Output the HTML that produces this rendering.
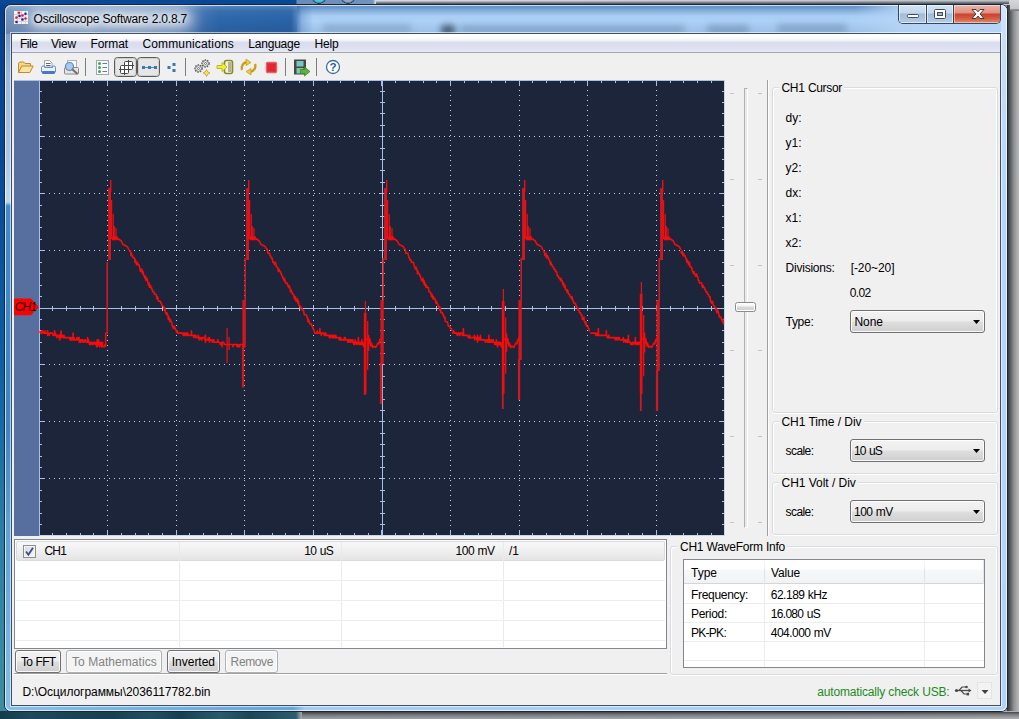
<!DOCTYPE html><html><head><meta charset="utf-8"><title>Oscilloscope Software 2.0.8.7</title><style>
html,body{margin:0;padding:0}
body{width:1019px;height:719px;overflow:hidden;position:relative;font-family:"Liberation Sans",sans-serif;font-size:12px;color:#000;
 background:#0b4a96}
div,span,i{box-sizing:border-box}
.a{position:absolute}
.t{position:absolute;white-space:nowrap;z-index:5}
#desk{position:absolute;left:0;top:0;width:1019px;height:719px;
 background:
  linear-gradient(180deg,#d4d7da 0,#c2c6ca 9px,#5a5e62 10px,#9a9ea2 11px) 1010px 0/9px 11px no-repeat,
  linear-gradient(180deg,rgba(0,0,0,0) 0,rgba(40,55,70,.15) 1px,rgba(30,45,60,.5) 2.5px,rgba(20,35,50,.75) 4px) 376px 0/633px 4px no-repeat,
  radial-gradient(circle at 7px -4px,#4fc0d8 0,#4fc0d8 6px,#223a55 7.5px,rgba(0,0,0,0) 8px) 312px 0/15px 4px no-repeat,
  radial-gradient(circle at 7px -4px,#8fa6c4 0,#8fa6c4 6px,#223a55 7.5px,rgba(0,0,0,0) 8px) 341px 0/15px 4px no-repeat,
  linear-gradient(90deg,#0a4896 0,#0a4896 296px,#6a8cb8 297px,#7393bd 373px,#e4e6e9 376px,#d6d9dc 700px,#c8cacc 100%) 0 0/1019px 5px no-repeat,
  linear-gradient(180deg,rgba(0,0,0,.6) 0,rgba(0,0,0,.25) 3px,rgba(0,0,0,0) 7px) 302px 712px/717px 7px no-repeat,
  linear-gradient(90deg,#143a4c 0,#1d4a5c 30px,#17404f 110px,#21505f 150px,#173f4e 180px,#2a5c6c 220px,#1c4656 250px,#2c5e6e 296px,#9ea2a6 301px,#aeb0b3 100%) 0 711px/1019px 8px no-repeat,
  linear-gradient(180deg,#093f8c 0,#0a4a98 25%,#0d5ea4 50%,#2b7fa6 75%,#3f8e9e 100%) 0 0/8px 719px no-repeat,
  linear-gradient(90deg,#2a2d30 0,#55585b 3px,#909396 7px,#b8babc 12px) 1007px 0/12px 719px no-repeat,
  #888}
#win{position:absolute;left:4px;top:4px;width:1004px;height:708px;border:1px solid #17263c;border-radius:7px;overflow:hidden;background:#b4d4f7}
#win:after{content:"";position:absolute;left:0;top:0;right:0;bottom:0;border-radius:6px;box-shadow:inset 0 0 0 1px rgba(255,255,255,.7)}
#tl{position:absolute;left:0;top:0;width:310px;height:29px;
 background:linear-gradient(90deg,#6f92be 0,#7d9dc6 30px,#7c9cc5 140px,#6a8fc0 175px,#3d70b0 198px,#2e67aa 215px,#2a63a7 286px,rgba(42,99,167,.75) 291px,rgba(60,110,175,.3) 297px,rgba(90,130,190,0) 308px)}
#tl:after{content:"";position:absolute;left:0;top:0;width:292px;height:29px;background:linear-gradient(180deg,rgba(255,255,255,.22) 0,rgba(255,255,255,.05) 6px,rgba(0,0,30,0) 14px,rgba(0,0,40,.10) 29px)}
#tr{position:absolute;left:0;top:0;width:1002px;height:29px;
 background:linear-gradient(90deg,rgba(180,212,246,0) 0,rgba(180,212,246,0) 850px,rgba(180,212,246,.92) 896px,rgba(184,214,247,.95) 100%),linear-gradient(180deg,#5e8bbf 0,#6f9bcd 3px,#8fb7e2 7px,#a9cdf3 11px,#aed1f6 16px,#a5c9ef 21px,#9abde6 29px)}
.sm{position:absolute;filter:blur(3px);background:#5f7ea6;opacity:.55;border-radius:3px}
#glow{position:absolute;left:26px;top:6px;width:164px;height:18px;background:rgba(255,255,255,.48);filter:blur(7px);border-radius:9px}
#fl{position:absolute;left:0;top:29px;width:7px;height:677px;background:linear-gradient(180deg,#7e9ec8 0,#9cb9dc 40px,#a9c6e6 120px,#bcd6ef 168px,#3f8bcb 172px,#3a86c6 390px,#5aa2d7 490px,#84bfe5 676px)}
#fr{position:absolute;left:996px;top:0;width:6px;height:706px;background:linear-gradient(180deg,#d2e4f7 0,#c4dcf5 60px,#b6d5f6 200px,#b3d3f6 100%)}
#fb{position:absolute;left:0;top:700px;width:1002px;height:6px;background:linear-gradient(90deg,#86c0e8 0,#74b0e0 150px,#68a6da 288px,#a6caf1 300px,#b3d3f7 100%)}
#cli{position:absolute;left:12px;top:34px;width:988px;height:671px;background:#f0f0f0;
 box-shadow:0 0 0 1px #3f4f66,0 0 0 2px rgba(255,255,255,.6)}
#menu{position:absolute;left:12px;top:34px;width:988px;height:19px;border-bottom:1px solid #a3a6b3;
 background:linear-gradient(180deg,#fff 0,#fcfcfe 4px,#eef0f8 7px,#dadded 8px,#dcdfee 13px,#e6e8f5 18px)}
.combo{position:absolute;width:135px;height:23px;border:1px solid #707070;border-radius:3px;
 background:linear-gradient(180deg,#f3f3f3 0,#ececec 10px,#dedede 11px,#cfcfcf 21px);box-shadow:inset 0 0 0 1px rgba(255,255,255,.85)}
.combo i{position:absolute;right:4px;top:9px;width:7px;height:4px;background:#000;clip-path:polygon(0 0,100% 0,50% 100%)}
.btn{position:absolute;height:23px;border:1px solid #707070;border-radius:3px;
 background:linear-gradient(180deg,#f3f3f3 0,#ececec 10px,#dedede 11px,#cfcfcf 21px);box-shadow:inset 0 0 0 1px rgba(255,255,255,.85)}
.btn.dis{border-color:#adb2b5;background:#f4f4f4;box-shadow:inset 0 0 0 1px #fcfcfc}
.gb{position:absolute;border:1px solid #d8dcdf;border-radius:3px;box-shadow:inset 1px 1px 0 0 #fff,inset -1px 0 0 0 #fff,0 1px 0 0 #fff}
.gl{position:absolute;background:#f0f0f0;height:4px}
.lv{position:absolute;border:1px solid #828790;background:#fff}
</style></head><body>
<div id="desk"></div>
<div id="win"><div id="tr"></div><div id="tl"></div><div id="fl"></div><div id="fr"></div><div id="fb"></div><div id="glow"></div><div class="sm" style="left:318px;top:19px;width:88px;height:9px;opacity:.35"></div><div class="sm" style="left:436px;top:20px;width:14px;height:10px;background:#33465e;opacity:.8"></div><div class="sm" style="left:455px;top:20px;width:225px;height:9px;opacity:.4"></div><div class="sm" style="left:702px;top:20px;width:42px;height:9px;opacity:.5"></div><div class="sm" style="left:772px;top:19px;width:70px;height:9px;opacity:.45"></div></div>
<div class="a" style="left:898px;top:5px;width:103px;height:19px;border:1px solid #34455c;border-top:none;border-radius:0 0 5px 5px;overflow:hidden;background:#9fbbd8">
<div class="a" style="left:0;top:0;width:27px;height:18px;background:linear-gradient(180deg,#d4e3f3 0,#c2d6ea 8px,#9fbcd9 9px,#b4cce4 18px);box-shadow:inset 0 0 0 1px rgba(255,255,255,.6)"></div>
<div class="a" style="left:27px;top:0;width:1px;height:18px;background:#34455c"></div>
<div class="a" style="left:28px;top:0;width:26px;height:18px;background:linear-gradient(180deg,#d4e3f3 0,#c2d6ea 8px,#9fbcd9 9px,#b4cce4 18px);box-shadow:inset 0 0 0 1px rgba(255,255,255,.6)"></div>
<div class="a" style="left:54px;top:0;width:1px;height:18px;background:#34455c"></div>
<div class="a" style="left:55px;top:0;width:47px;height:18px;background:linear-gradient(180deg,#ecb5a8 0,#e09080 8px,#c9452c 9px,#d2583e 13px,#e08a6c 18px);box-shadow:inset 0 0 0 1px rgba(255,255,255,.45)"></div>
<svg class="a" style="left:0;top:-1px" width="102" height="19" viewBox="0 0 102 19">
<rect x="8.500" y="10.500" width="11" height="3" rx="1" fill="#fff" stroke="#3f4a5c" stroke-width="1"/>
<rect x="35.500" y="5.500" width="11" height="9" rx="1" fill="#fff" stroke="#3f4a5c" stroke-width="1"/>
<rect x="38.500" y="8.500" width="5" height="3" fill="#9fb6cf" stroke="#3f4a5c" stroke-width="1"/>
<path d="M73 5.500h4l2 2.300 2-2.300h4l-3.900 4.400 3.900 4.600h-4l-2-2.400-2 2.400h-4l3.900-4.600z" fill="#fff" stroke="#4a3838" stroke-width="1" stroke-linejoin="round"/>
</svg></div>
<svg class="a" style="left:13px;top:11px" width="15" height="14" viewBox="0 0 15 14"><rect x="0" y="0" width="15" height="14" fill="#8a8f9a"/><rect x="1" y="0" width="14" height="13" fill="#f6f3f3"/>
<path d="M1 3.500h14M1 7.500h14M1 10.500h14M4.500 0v13M8.500 0v13M12.500 0v13" stroke="#d8cfd4" stroke-width="1"/>
<circle cx="6" cy="1.800" r="1.300" fill="#e02020"/><circle cx="9.500" cy="4.500" r="1.300" fill="#e02020"/><circle cx="3.500" cy="6.500" r="1.300" fill="#e02020"/><circle cx="12.500" cy="7.500" r="1.300" fill="#e02020"/>
<circle cx="12.500" cy="2.800" r="1.300" fill="#2020c0"/><circle cx="6.500" cy="5" r="1.300" fill="#2020c0"/><circle cx="9.500" cy="8.500" r="1.300" fill="#2020c0"/><circle cx="3.500" cy="11" r="1.300" fill="#2020c0"/></svg>
<div id="cli"></div>
<div id="menu"></div>
<svg style="position:absolute;left:13px;top:53px" width="360" height="27" viewBox="13 53 360 27">
<rect x="85" y="58" width="1" height="18" fill="#7d7d7d" shape-rendering="crispEdges"/>
<rect x="185" y="58" width="1" height="18" fill="#7d7d7d" shape-rendering="crispEdges"/>
<rect x="285" y="58" width="1" height="18" fill="#7d7d7d" shape-rendering="crispEdges"/>
<rect x="316" y="58" width="1" height="18" fill="#7d7d7d" shape-rendering="crispEdges"/>
<path d="M18.5 72.5v-9.2l1.2-1.3h4l1.3 1.5h5.5v2.5" fill="#f5d78a" stroke="#c08a30" stroke-width="1"/>
<path d="M18.5 72.5l3.2-6.5h11.5l-3.4 6.5z" fill="#fbe3a0" stroke="#c08a30" stroke-width="1" stroke-linejoin="round"/>
<path d="M44.5 67v-6.500h5l2.500 2.500v4z" fill="#fffff8" stroke="#a8a898" stroke-width="1"/>
<path d="M46 63.500h4.500M46 65.500h4.500" stroke="#506890" stroke-width="1"/>
<path d="M41.500 72v-4.500q0-1.500 1.500-1.500h1.500v1.500h8v-1.500h1.500q1.500 0 1.500 1.500v4.500z" fill="#eaf1fb" stroke="#6a8cc8" stroke-width="1"/>
<rect x="42" y="71" width="13" height="3" rx="1.2" fill="#4a78c8"/>
<rect x="67.5" y="60.500" width="9" height="10" fill="#fcfcfc" stroke="#b0b0b0" stroke-width="1"/>
<rect x="64.5" y="67.5" width="14" height="6.5" rx="1" fill="#e6e6e6" stroke="#8a8a8a" stroke-width="1"/>
<circle cx="69.5" cy="66.5" r="4" fill="#a8c8f0" stroke="#6088b8" stroke-width="1.2"/>
<path d="M72.5 69.5l4.5 4" stroke="#707070" stroke-width="2" stroke-linecap="round"/>
<rect x="96.5" y="60.500" width="12" height="14" fill="#f6fbff" stroke="#a0a8b8" stroke-width="1"/>
<circle cx="99.500" cy="63.5" r="1.5" fill="#48a848"/>
<path d="M102.5 63.5h4.5" stroke="#6a7890" stroke-width="1"/>
<circle cx="99.500" cy="67.5" r="1.5" fill="#48a848"/>
<path d="M102.5 67.5h4.5" stroke="#6a7890" stroke-width="1"/>
<circle cx="99.500" cy="71.5" r="1.5" fill="#48a848"/>
<path d="M102.5 71.5h4.5" stroke="#6a7890" stroke-width="1"/>
<rect x="114.5" y="57.500" width="22" height="19" rx="3" fill="#e6e6e6" stroke="#5c5c5c" stroke-width="1"/>
<rect x="115.5" y="58.500" width="20" height="17" rx="2.5" fill="none" stroke="#cfcfcf" stroke-width="1"/>
<rect x="137.5" y="57.500" width="22" height="19" rx="3" fill="#e6e6e6" stroke="#5c5c5c" stroke-width="1"/>
<rect x="138.5" y="58.500" width="20" height="17" rx="2.5" fill="none" stroke="#cfcfcf" stroke-width="1"/>
<rect x="124.5" y="61.500" width="8" height="8" rx="1" fill="#fff" stroke="#444" stroke-width="1"/>
<path d="M128.5 60v10M123 65.500h11" stroke="#444" stroke-width="1"/>
<rect x="120.5" y="65.500" width="8" height="8" rx="1" fill="#fff" stroke="#444" stroke-width="1"/>
<path d="M124.5 64v11M119 69.500h11" stroke="#444" stroke-width="1"/>
<path d="M143 67.500h12" stroke="#5888b8" stroke-width="1"/>
<rect x="142" y="66" width="3" height="3" fill="#3a78b0"/>
<rect x="148" y="66" width="3" height="3" fill="#3a78b0"/>
<rect x="154" y="66" width="3" height="3" fill="#3a78b0"/>
<rect x="167.5" y="66" width="3" height="3" fill="#3a78b0"/>
<rect x="172.5" y="63" width="3" height="3" fill="#3a78b0"/>
<rect x="172.5" y="69" width="3" height="3" fill="#3a78b0"/>
<circle cx="198.5" cy="68.5" r="3.5999999999999996" fill="#f8f8f8" stroke="#585858" stroke-width="1.3" stroke-dasharray="1.5 1.1"/>
<circle cx="198.5" cy="68.5" r="2.8" fill="#fcfcfc" stroke="#606060" stroke-width="0.8"/>
<circle cx="198.5" cy="68.5" r="1" fill="#fff" stroke="#505050" stroke-width="0.8"/>
<circle cx="205.5" cy="63.5" r="3.5999999999999996" fill="#f8f8f8" stroke="#585858" stroke-width="1.3" stroke-dasharray="1.5 1.1"/>
<circle cx="205.5" cy="63.5" r="2.8" fill="#fcfcfc" stroke="#606060" stroke-width="0.8"/>
<circle cx="205.5" cy="63.5" r="1" fill="#fff" stroke="#505050" stroke-width="0.8"/>
<path d="M206.5 69.500l1.2 2.300 2.300 1.200-2.300 1.200-1.200 2.300-1.200-2.300-2.300-1.200 2.300-1.200z" fill="#f8e060" stroke="#b89820" stroke-width="0.7"/>
<rect x="224.5" y="60.500" width="8" height="13" rx="2" fill="#f4f4e0" stroke="#8a8a20" stroke-width="1.6"/>
<rect x="228" y="62" width="3.5" height="10" fill="#b0b0a0"/>
<path d="M217 65.500h5v-3l5 4.500-5 4.500v-3h-5z" fill="#f4f030" stroke="#b0a818" stroke-width="0.8"/>
<path d="M242 70a6 6 0 0 1 5-8" fill="none" stroke="#c8a020" stroke-width="2.400"/>
<path d="M255 64a6 6 0 0 1-5 8" fill="none" stroke="#c8a020" stroke-width="2.400"/>
<path d="M246 59l5 3.500-5 3z" fill="#f0d030" stroke="#b08c18" stroke-width="0.6"/>
<path d="M251 75l-5-3.500 5-3z" fill="#f0d030" stroke="#b08c18" stroke-width="0.6"/>
<rect x="266.500" y="62.500" width="10" height="10" rx="1" fill="#e02830" stroke="#e86068" stroke-width="1.4"/>
<rect x="294" y="59.500" width="12" height="15" fill="#484848"/>
<rect x="296.500" y="61" width="7" height="5.500" fill="#78c8c0"/>
<rect x="296.500" y="68" width="7" height="5.500" fill="#78c8b0"/>
<path d="M300.500 69.500h4v-2.500l5.500 4.500-5.500 4.500v-2.500h-4z" fill="#60b040" stroke="#3a8828" stroke-width="0.8"/>
<circle cx="333" cy="67" r="6.500" fill="#fff" stroke="#3a6ea8" stroke-width="1.3"/>
<text x="333" y="71.300" text-anchor="middle" font-family="Liberation Sans, sans-serif" font-weight="bold" font-size="11.500" fill="#2a5a98">?</text>
</svg>
<svg style="position:absolute;left:14px;top:80px" width="712" height="457" viewBox="14 80 712 457" shape-rendering="crispEdges">
<rect x="14" y="80" width="26" height="456" fill="#566f9e"/>
<rect x="40" y="80" width="685" height="456" fill="#1c2539"/>
<path d="M107.5 90v440 M176.5 90v440 M244.5 90v440 M313.5 90v440 M450.5 90v440 M519.5 90v440 M587.5 90v440 M656.5 90v440 M49 136.5h670 M49 193.5h670 M49 250.5h670 M49 364.5h670 M49 421.5h670 M49 478.5h670" stroke="#c3cfe6" stroke-width="1" stroke-dasharray="1 4" fill="none"/>
<path d="M52.5 81v2 M52.5 535v-2 M52.5 306v5 M66.5 81v2 M66.5 535v-2 M66.5 306v5 M80.5 81v2 M80.5 535v-2 M80.5 306v5 M93.5 81v2 M93.5 535v-2 M93.5 306v5 M107.5 81v5 M107.5 535v-5 M107.5 306v5 M121.5 81v2 M121.5 535v-2 M121.5 306v5 M135.5 81v2 M135.5 535v-2 M135.5 306v5 M148.5 81v2 M148.5 535v-2 M148.5 306v5 M162.5 81v2 M162.5 535v-2 M162.5 306v5 M176.5 81v5 M176.5 535v-5 M176.5 306v5 M189.5 81v2 M189.5 535v-2 M189.5 306v5 M203.5 81v2 M203.5 535v-2 M203.5 306v5 M217.5 81v2 M217.5 535v-2 M217.5 306v5 M231.5 81v2 M231.5 535v-2 M231.5 306v5 M244.5 81v5 M244.5 535v-5 M244.5 306v5 M258.5 81v2 M258.5 535v-2 M258.5 306v5 M272.5 81v2 M272.5 535v-2 M272.5 306v5 M285.5 81v2 M285.5 535v-2 M285.5 306v5 M299.5 81v2 M299.5 535v-2 M299.5 306v5 M313.5 81v5 M313.5 535v-5 M313.5 306v5 M327.5 81v2 M327.5 535v-2 M327.5 306v5 M340.5 81v2 M340.5 535v-2 M340.5 306v5 M354.5 81v2 M354.5 535v-2 M354.5 306v5 M368.5 81v2 M368.5 535v-2 M368.5 306v5 M381.5 81v5 M381.5 535v-5 M381.5 306v5 M395.5 81v2 M395.5 535v-2 M395.5 306v5 M409.5 81v2 M409.5 535v-2 M409.5 306v5 M423.5 81v2 M423.5 535v-2 M423.5 306v5 M436.5 81v2 M436.5 535v-2 M436.5 306v5 M450.5 81v5 M450.5 535v-5 M450.5 306v5 M464.5 81v2 M464.5 535v-2 M464.5 306v5 M478.5 81v2 M478.5 535v-2 M478.5 306v5 M491.5 81v2 M491.5 535v-2 M491.5 306v5 M505.5 81v2 M505.5 535v-2 M505.5 306v5 M519.5 81v5 M519.5 535v-5 M519.5 306v5 M532.5 81v2 M532.5 535v-2 M532.5 306v5 M546.5 81v2 M546.5 535v-2 M546.5 306v5 M560.5 81v2 M560.5 535v-2 M560.5 306v5 M574.5 81v2 M574.5 535v-2 M574.5 306v5 M587.5 81v5 M587.5 535v-5 M587.5 306v5 M601.5 81v2 M601.5 535v-2 M601.5 306v5 M615.5 81v2 M615.5 535v-2 M615.5 306v5 M628.5 81v2 M628.5 535v-2 M628.5 306v5 M642.5 81v2 M642.5 535v-2 M642.5 306v5 M656.5 81v5 M656.5 535v-5 M656.5 306v5 M670.5 81v2 M670.5 535v-2 M670.5 306v5 M683.5 81v2 M683.5 535v-2 M683.5 306v5 M697.5 81v2 M697.5 535v-2 M697.5 306v5 M711.5 81v2 M711.5 535v-2 M711.5 306v5 M40 91.5h2 M724 91.5h-2 M380 91.5h5 M40 102.5h2 M724 102.5h-2 M380 102.5h5 M40 113.5h2 M724 113.5h-2 M380 113.5h5 M40 125.5h2 M724 125.5h-2 M380 125.5h5 M40 136.5h5 M724 136.5h-5 M380 136.5h5 M40 148.5h2 M724 148.5h-2 M380 148.5h5 M40 159.5h2 M724 159.5h-2 M380 159.5h5 M40 170.5h2 M724 170.5h-2 M380 170.5h5 M40 182.5h2 M724 182.5h-2 M380 182.5h5 M40 193.5h5 M724 193.5h-5 M380 193.5h5 M40 205.5h2 M724 205.5h-2 M380 205.5h5 M40 216.5h2 M724 216.5h-2 M380 216.5h5 M40 227.5h2 M724 227.5h-2 M380 227.5h5 M40 239.5h2 M724 239.5h-2 M380 239.5h5 M40 250.5h5 M724 250.5h-5 M380 250.5h5 M40 262.5h2 M724 262.5h-2 M380 262.5h5 M40 273.5h2 M724 273.5h-2 M380 273.5h5 M40 285.5h2 M724 285.5h-2 M380 285.5h5 M40 296.5h2 M724 296.5h-2 M380 296.5h5 M40 319.5h2 M724 319.5h-2 M380 319.5h5 M40 330.5h2 M724 330.5h-2 M380 330.5h5 M40 342.5h2 M724 342.5h-2 M380 342.5h5 M40 353.5h2 M724 353.5h-2 M380 353.5h5 M40 364.5h5 M724 364.5h-5 M380 364.5h5 M40 376.5h2 M724 376.5h-2 M380 376.5h5 M40 387.5h2 M724 387.5h-2 M380 387.5h5 M40 399.5h2 M724 399.5h-2 M380 399.5h5 M40 410.5h2 M724 410.5h-2 M380 410.5h5 M40 421.5h5 M724 421.5h-5 M380 421.5h5 M40 433.5h2 M724 433.5h-2 M380 433.5h5 M40 444.5h2 M724 444.5h-2 M380 444.5h5 M40 456.5h2 M724 456.5h-2 M380 456.5h5 M40 467.5h2 M724 467.5h-2 M380 467.5h5 M40 478.5h5 M724 478.5h-5 M380 478.5h5 M40 490.5h2 M724 490.5h-2 M380 490.5h5 M40 501.5h2 M724 501.5h-2 M380 501.5h5 M40 513.5h2 M724 513.5h-2 M380 513.5h5 M40 524.5h2 M724 524.5h-2 M380 524.5h5" stroke="#a9c0e6" stroke-width="1" fill="none"/>
<path d="M39.5 80v456M14 80.5h711M40 308.5h684M382.5 81v454" stroke="#a9c0e6" stroke-width="1" fill="none"/>
<path d="M724.5 80v456M40 535.5h685" stroke="#c6d6ee" stroke-width="1" fill="none"/>
<g shape-rendering="auto"><rect x="106.4" y="262.0" width="1.6" height="72.0" fill="#d2181e"/><rect x="108.1" y="188.0" width="2.9" height="72.0" fill="#d2181e"/><rect x="110.0" y="180.0" width="1.4" height="12.0" fill="#f40c0c"/><rect x="110.9" y="200.0" width="1.3" height="39.0" fill="#f40c0c"/><rect x="111.8" y="236.3" width="6.0" height="4.0" fill="#f40c0c"/><rect x="241.9" y="346.5" width="2.3" height="41.0" fill="#d2181e"/><rect x="242.4" y="300.0" width="3.4" height="47.5" fill="#d2181e"/><rect x="244.4" y="258.0" width="1.6" height="43.0" fill="#d2181e"/><rect x="246.1" y="188.0" width="2.9" height="72.0" fill="#d2181e"/><rect x="248.0" y="180.0" width="1.4" height="12.0" fill="#f40c0c"/><rect x="248.9" y="200.0" width="1.3" height="39.0" fill="#f40c0c"/><rect x="249.8" y="236.3" width="6.0" height="4.0" fill="#f40c0c"/><rect x="363.8" y="313.0" width="2.7" height="81.0" fill="#f40c0c"/><rect x="363.9" y="393.0" width="1.8" height="2.0" fill="#d2181e"/><rect x="379.9" y="363.0" width="2.3" height="41.0" fill="#d2181e"/><rect x="380.4" y="300.0" width="3.4" height="64.0" fill="#d2181e"/><rect x="382.4" y="258.0" width="1.6" height="43.0" fill="#d2181e"/><rect x="384.1" y="188.0" width="2.9" height="72.0" fill="#d2181e"/><rect x="386.0" y="180.0" width="1.4" height="12.0" fill="#f40c0c"/><rect x="386.9" y="200.0" width="1.3" height="39.0" fill="#f40c0c"/><rect x="387.8" y="236.3" width="6.0" height="4.0" fill="#f40c0c"/><rect x="501.8" y="301.0" width="2.7" height="93.0" fill="#f40c0c"/><rect x="501.9" y="393.0" width="1.8" height="16.0" fill="#d2181e"/><rect x="517.9" y="359.0" width="2.3" height="41.0" fill="#d2181e"/><rect x="518.4" y="300.0" width="3.4" height="60.0" fill="#d2181e"/><rect x="520.4" y="258.0" width="1.6" height="43.0" fill="#d2181e"/><rect x="522.1" y="188.0" width="2.9" height="72.0" fill="#d2181e"/><rect x="524.0" y="180.0" width="1.4" height="12.0" fill="#f40c0c"/><rect x="524.9" y="200.0" width="1.3" height="39.0" fill="#f40c0c"/><rect x="525.8" y="236.3" width="6.0" height="4.0" fill="#f40c0c"/><rect x="639.8" y="294.0" width="2.7" height="100.0" fill="#f40c0c"/><rect x="639.9" y="393.0" width="1.8" height="18.0" fill="#d2181e"/><rect x="655.9" y="370.0" width="2.3" height="41.0" fill="#d2181e"/><rect x="656.4" y="300.0" width="3.4" height="71.0" fill="#d2181e"/><rect x="658.4" y="258.0" width="1.6" height="43.0" fill="#d2181e"/><rect x="660.1" y="188.0" width="2.9" height="72.0" fill="#d2181e"/><rect x="662.0" y="180.0" width="1.4" height="12.0" fill="#f40c0c"/><rect x="662.9" y="200.0" width="1.3" height="39.0" fill="#f40c0c"/><rect x="663.8" y="236.3" width="6.0" height="4.0" fill="#f40c0c"/><path d="M113.2 214.0L113.2 239.0 M114.2 226.0L114.2 239.0 M116.0 228.0L116.0 239.0 M227.1 328.0L227.1 363.0 M229.1 337.0L229.1 350.0 M251.2 214.0L251.2 239.0 M252.2 226.0L252.2 239.0 M254.0 228.0L254.0 239.0 M365.4 301.0L365.4 315.0 M367.7 321.0L367.7 370.0 M368.7 335.0L368.7 351.0 M389.2 214.0L389.2 239.0 M390.2 226.0L390.2 239.0 M392.0 228.0L392.0 239.0 M503.4 289.0L503.4 303.0 M505.7 317.4L505.7 373.8 M506.7 333.5L506.7 351.9 M527.2 214.0L527.2 239.0 M528.2 226.0L528.2 239.0 M530.0 228.0L530.0 239.0 M641.4 282.0L641.4 296.0 M643.7 315.0L643.7 376.2 M644.7 332.5L644.7 352.5 M665.2 214.0L665.2 239.0 M666.2 226.0L666.2 239.0 M668.0 228.0L668.0 239.0" fill="none" stroke="#e81216" stroke-width="1.25"/><polyline points="40.0,330.8 40.5,333.1 41.0,333.1 41.5,330.8 42.0,333.1 42.5,330.8 43.0,330.8 43.5,333.1 44.0,333.1 44.5,333.1 45.0,333.1 45.1,330.8 45.2,333.1 45.5,333.1 46.0,333.1 46.5,333.1 47.0,333.1 47.5,333.1 47.6,330.8 47.7,335.4 48.0,333.1 48.5,333.1 49.0,333.1 49.5,335.4 50.0,333.1 50.5,333.1 51.0,333.1 51.5,333.1 52.0,333.1 52.5,333.1 53.0,335.4 53.5,335.4 54.0,335.4 54.5,335.4 54.6,330.8 54.7,335.4 55.0,335.4 55.5,333.1 56.0,335.4 56.5,335.4 57.0,337.6 57.5,335.4 58.0,335.4 58.5,335.4 59.0,337.6 59.5,337.6 59.6,335.4 59.7,339.9 60.0,337.6 60.5,335.4 60.6,333.1 60.7,335.4 61.0,335.4 61.1,330.8 61.2,337.6 61.5,335.4 62.0,335.4 62.5,335.4 63.0,337.6 63.5,337.6 64.0,335.4 64.5,337.6 65.0,337.6 65.5,337.6 66.0,337.6 66.5,337.6 67.0,337.6 67.5,337.6 68.0,337.6 68.5,337.6 69.0,337.6 69.5,337.6 70.0,339.9 70.5,337.6 71.0,339.9 71.5,337.6 72.0,339.9 72.5,337.6 73.0,337.6 73.1,333.1 73.2,339.9 73.5,339.9 74.0,337.6 74.5,339.9 75.0,339.9 75.5,339.9 76.0,339.9 76.5,339.9 77.0,337.6 77.5,337.6 78.0,339.9 78.5,337.6 79.0,339.9 79.1,337.6 79.2,342.2 79.5,339.9 80.0,342.2 80.5,339.9 81.0,342.2 81.5,339.9 82.0,339.9 82.5,339.9 83.0,342.2 83.5,342.2 84.0,342.2 84.5,339.9 85.0,339.9 85.5,339.9 86.0,342.2 86.5,342.2 87.0,342.2 87.5,342.2 87.6,337.6 87.7,342.2 88.0,342.2 88.5,339.9 89.0,342.2 89.5,344.5 90.0,342.2 90.5,342.2 91.0,344.5 91.5,342.2 92.0,342.2 92.5,342.2 93.0,344.5 93.5,344.5 94.0,342.2 94.5,342.2 95.0,342.2 95.5,344.5 96.0,344.5 96.5,344.5 96.6,342.2 96.7,346.8 97.0,344.5 97.1,339.9 97.2,346.8 97.5,342.2 98.0,342.2 98.5,344.5 98.6,339.9 98.7,344.5 99.0,344.5 99.5,346.8 100.0,342.2 100.5,344.5 101.0,342.2 101.5,346.8 102.0,344.5 102.5,344.5 102.6,342.2 102.7,346.8 103.0,346.8 103.5,346.8 104.0,346.8 104.5,346.8 105.0,344.5 105.6,346.0 105.7,333.0 106.5,333.0" fill="none" stroke="#f40c0c" stroke-width="1.6" stroke-linejoin="round"/><polyline points="116.8,238.0 119.3,239.5 121.3,241.0 123.1,244.6 125.3,245.5 127.3,246.6 129.0,250.0" fill="none" stroke="#f40c0c" stroke-width="1.6" stroke-linejoin="round"/><polyline points="129.0,251.0 129.5,251.0 130.0,251.0 130.5,251.0 131.0,255.6 131.5,253.3 132.0,255.6 132.5,255.6 133.0,257.8 133.5,257.8 134.0,257.8 134.5,257.8 135.0,262.4 135.5,260.1 136.0,262.4 136.5,264.7 137.0,264.7 137.5,262.4 138.0,264.7 138.5,264.7 139.0,264.7 139.5,267.0 140.0,269.2 140.5,271.5 141.0,269.2 141.5,271.5 142.0,269.2 142.5,273.8 143.0,271.5 143.5,273.8 144.0,276.1 144.5,276.1 145.0,278.4 145.5,276.1 146.0,280.6 146.5,278.4 147.0,278.4 147.5,280.6 148.0,282.9 148.5,285.2 149.0,282.9 149.5,287.5 150.0,287.5 150.5,285.2 151.0,287.5 151.5,287.5 152.0,289.8 152.5,289.8 153.0,292.0 153.5,292.0 154.0,292.0 154.5,294.3 155.0,294.3 155.5,294.3 156.0,294.3 156.5,296.6 157.0,298.9 157.5,296.6 158.0,298.9 158.5,301.2 159.0,301.2 159.5,301.2 160.0,301.2 160.5,301.2 161.0,303.4 161.5,303.4 162.0,305.7 162.5,305.7 163.0,305.7" fill="none" stroke="#f40c0c" stroke-width="1.6" stroke-linejoin="round"/><polyline points="163.4,305.7 163.9,308.0 164.4,310.3 164.9,308.0 165.4,312.6 165.9,312.6 166.4,314.8 166.9,312.6 167.4,314.8 167.9,314.8 168.4,319.4 168.9,317.1 169.4,319.4 169.9,321.7 170.4,319.4 170.9,321.7 171.4,321.7 171.9,324.0 172.4,326.2 172.9,326.2 173.4,328.5 173.9,326.2 174.4,326.2 174.9,328.5 175.4,328.5 175.9,330.8" fill="none" stroke="#f40c0c" stroke-width="1.6" stroke-linejoin="round"/><polyline points="176.3,333.1 176.8,330.8 177.3,330.8 177.8,333.1 178.3,333.1 178.8,333.1 179.3,333.1 179.8,333.1 180.3,333.1 180.8,333.1 181.3,333.1 181.8,333.1 182.3,333.1 182.8,333.1 183.3,335.4 183.8,333.1 184.3,335.4 184.8,333.1 185.3,333.1 185.8,335.4 186.3,333.1 186.8,335.4 187.3,335.4 187.8,333.1 188.3,335.4 188.8,335.4 189.3,335.4 189.8,335.4 190.3,335.4 190.8,335.4 191.3,335.4 191.4,330.8 191.5,335.4 191.8,335.4 192.3,335.4 192.8,335.4 193.3,335.4 193.8,337.6 194.3,335.4 194.8,335.4 195.3,335.4 195.8,337.6 195.9,335.4 196.0,337.6 196.3,337.6 196.8,337.6 197.3,337.6 197.8,337.6 198.3,335.4 198.8,337.6 199.3,339.9 199.8,337.6 200.3,337.6 200.8,337.6 201.3,339.9 201.8,339.9 202.3,337.6 202.8,337.6 203.3,337.6 203.8,337.6 204.3,337.6 204.8,339.9 205.3,339.9 205.4,335.4 205.5,342.2 205.8,339.9 206.3,339.9 206.8,339.9 207.3,339.9 207.8,339.9 208.3,337.6 208.8,339.9 209.3,339.9 209.4,337.6 209.5,342.2 209.8,339.9 210.3,339.9 210.8,339.9 211.3,339.9 211.8,339.9 212.3,342.2 212.8,342.2 213.3,339.9 213.8,339.9 214.3,342.2 214.8,342.2 215.3,342.2 215.8,342.2 216.3,342.2 216.8,342.2 217.3,342.2 217.8,339.9 218.3,342.2 218.8,342.2 219.3,342.2 219.8,342.2 220.3,344.5 220.8,344.5 221.3,344.5 221.8,344.5 221.9,342.2 222.0,346.8 222.3,342.2 222.8,342.2 223.3,342.2 223.8,342.2 224.3,344.5 224.8,344.5 225.3,344.5 225.8,344.5 228.1,344.5 228.6,344.5 229.1,344.5 229.6,344.5 230.1,344.5 230.6,344.5 231.1,344.5 231.6,344.5 232.1,344.5 232.6,344.5 233.1,346.8 233.6,344.5 234.1,344.5 234.6,344.5 235.1,344.5 235.6,344.5 236.1,344.5 236.6,344.5 237.1,346.8 237.6,344.5 238.1,346.8 238.6,344.5 239.1,346.8 239.6,346.8 240.1,344.5 240.6,344.5 241.1,344.5 241.6,344.5 242.1,344.5 242.6,344.5 243.1,346.8 243.6,346.8" fill="none" stroke="#f40c0c" stroke-width="1.6" stroke-linejoin="round"/><polyline points="254.8,238.0 257.3,239.5 259.3,241.0 261.1,244.6 263.3,245.5 265.3,246.6 267.0,250.0" fill="none" stroke="#f40c0c" stroke-width="1.6" stroke-linejoin="round"/><polyline points="267.0,248.7 267.5,251.0 268.0,253.3 268.5,253.3 269.0,253.3 269.5,253.3 270.0,255.6 270.5,255.6 271.0,257.8 271.5,257.8 272.0,257.8 272.5,260.1 273.0,262.4 273.5,262.4 274.0,262.4 274.5,264.7 275.0,262.4 275.5,262.4 276.0,264.7 276.5,267.0 277.0,267.0 277.5,267.0 278.0,269.2 278.5,271.5 279.0,269.2 279.5,271.5 280.0,271.5 280.5,271.5 281.0,273.8 281.5,273.8 282.0,276.1 282.5,276.1 283.0,278.4 283.5,278.4 284.0,280.6 284.5,278.4 285.0,280.6 285.5,282.9 286.0,282.9 286.5,282.9 287.0,282.9 287.5,285.2 288.0,285.2 288.5,287.5 289.0,285.2 289.5,287.5 290.0,287.5 290.5,292.0 291.0,289.8 291.5,292.0 292.0,292.0 292.5,294.3 293.0,294.3 293.5,294.3 294.0,296.6 294.5,298.9 295.0,296.6 295.5,296.6 296.0,301.2 296.5,301.2 297.0,301.2 297.5,298.9 298.0,303.4 298.5,301.2 299.0,305.7 299.5,305.7 300.0,305.7 300.5,308.0 301.0,305.7" fill="none" stroke="#f40c0c" stroke-width="1.6" stroke-linejoin="round"/><polyline points="301.4,308.0 301.9,308.0 302.4,310.3 302.9,310.3 303.4,310.3 303.9,312.6 304.4,314.8 304.9,314.8 305.4,314.8 305.9,314.8 306.4,314.8 306.9,317.1 307.4,317.1 307.9,321.7 308.4,319.4 308.9,321.7 309.4,321.7 309.9,324.0 310.4,324.0 310.9,324.0 311.4,324.0 311.9,326.2 312.4,326.2 312.9,328.5 313.4,328.5 313.9,330.8" fill="none" stroke="#f40c0c" stroke-width="1.6" stroke-linejoin="round"/><polyline points="314.3,330.8 314.8,333.1 315.3,333.1 315.8,333.1 316.3,333.1 316.8,333.1 317.3,330.8 317.8,333.1 318.3,333.1 318.8,333.1 319.3,333.1 319.8,333.1 319.9,328.5 320.0,333.1 320.3,333.1 320.8,333.1 321.3,335.4 321.8,333.1 322.3,333.1 322.8,333.1 323.3,333.1 323.8,333.1 324.3,335.4 324.8,333.1 325.3,335.4 325.8,333.1 326.3,335.4 326.8,335.4 327.3,335.4 327.8,335.4 328.3,335.4 328.8,335.4 329.3,337.6 329.8,335.4 330.3,337.6 330.8,335.4 331.3,335.4 331.8,335.4 332.3,337.6 332.8,337.6 333.3,335.4 333.8,337.6 334.3,335.4 334.8,337.6 335.3,337.6 335.8,335.4 336.3,337.6 336.8,337.6 337.3,337.6 337.8,337.6 338.3,337.6 338.8,337.6 339.3,339.9 339.8,337.6 340.3,339.9 340.8,337.6 341.3,339.9 341.8,339.9 342.3,339.9 342.8,339.9 343.3,339.9 343.8,339.9 344.3,337.6 344.8,339.9 345.3,337.6 345.8,339.9 346.3,339.9 346.8,339.9 347.3,339.9 347.8,342.2 348.3,339.9 348.8,342.2 349.3,339.9 349.8,339.9 350.3,342.2 350.8,342.2 351.3,339.9 351.8,339.9 352.3,342.2 352.8,339.9 353.3,342.2 353.8,344.5 354.3,342.2 354.8,344.5 355.3,339.9 355.8,342.2 356.3,342.2 356.8,344.5 357.3,342.2 357.8,342.2 358.3,342.2 358.4,337.6 358.5,342.2 358.8,344.5 359.3,344.5 359.8,342.2 360.3,342.2 360.8,344.5 361.3,344.5 361.8,344.5 361.9,339.9 362.0,344.5 362.3,344.5 362.8,342.2 363.3,344.5 363.8,346.8" fill="none" stroke="#f40c0c" stroke-width="1.6" stroke-linejoin="round"/><polyline points="366.1,340.0 368.6,337.0 369.3,343.0 369.9,339.0 370.7,346.0 371.5,343.0 372.6,347.5 374.1,346.0 375.6,347.5 376.3,346.5 377.8,343.0 378.8,344.0 379.8,339.5 380.5,340.0 381.5,337.0" fill="none" stroke="#f40c0c" stroke-width="1.6" stroke-linejoin="round"/><polyline points="392.8,238.0 395.3,239.5 397.3,241.0 399.1,244.6 401.3,245.5 403.3,246.6 405.0,250.0" fill="none" stroke="#f40c0c" stroke-width="1.6" stroke-linejoin="round"/><polyline points="405.0,248.7 405.5,251.0 406.0,253.3 406.5,253.3 407.0,253.3 407.5,253.3 408.0,253.3 408.5,255.6 409.0,257.8 409.5,257.8 410.0,260.1 410.5,260.1 411.0,260.1 411.5,262.4 412.0,262.4 412.5,262.4 413.0,262.4 413.5,262.4 414.0,264.7 414.5,267.0 415.0,267.0 415.5,269.2 416.0,267.0 416.5,269.2 417.0,269.2 417.5,273.8 418.0,271.5 418.5,273.8 419.0,273.8 419.5,273.8 420.0,276.1 420.5,276.1 421.0,278.4 421.5,280.6 422.0,280.6 422.5,280.6 423.0,278.4 423.5,282.9 424.0,280.6 424.5,285.2 425.0,282.9 425.5,285.2 426.0,287.5 426.5,285.2 427.0,287.5 427.5,287.5 428.0,287.5 428.5,287.5 429.0,292.0 429.5,292.0 430.0,292.0 430.5,292.0 431.0,294.3 431.5,296.6 432.0,294.3 432.5,296.6 433.0,298.9 433.5,296.6 434.0,298.9 434.5,298.9 435.0,298.9 435.5,301.2 436.0,303.4 436.5,301.2 437.0,303.4 437.5,303.4 438.0,305.7 438.5,305.7 439.0,308.0" fill="none" stroke="#f40c0c" stroke-width="1.6" stroke-linejoin="round"/><polyline points="439.4,305.7 439.9,310.3 440.4,308.0 440.9,312.6 441.4,312.6 441.9,312.6 442.4,312.6 442.9,314.8 443.4,314.8 443.9,317.1 444.4,317.1 444.9,317.1 445.4,321.7 445.9,321.7 446.4,321.7 446.9,321.7 447.4,321.7 447.9,324.0 448.4,326.2 448.9,326.2 449.4,326.2 449.9,326.2 450.4,328.5 450.9,328.5 451.4,328.5 451.9,330.8" fill="none" stroke="#f40c0c" stroke-width="1.6" stroke-linejoin="round"/><polyline points="452.3,333.1 452.8,333.1 453.3,330.8 453.8,330.8 454.3,333.1 454.8,333.1 455.3,333.1 455.8,333.1 456.3,333.1 456.8,333.1 457.3,335.4 457.8,333.1 458.3,333.1 458.8,333.1 459.3,335.4 459.8,335.4 460.3,333.1 460.8,333.1 461.3,333.1 461.8,333.1 462.3,335.4 462.8,335.4 463.3,333.1 463.4,328.5 463.5,335.4 463.8,335.4 464.3,335.4 464.8,335.4 465.3,335.4 465.8,335.4 466.3,335.4 466.8,335.4 467.3,335.4 467.8,335.4 468.3,337.6 468.8,337.6 469.3,337.6 469.8,335.4 470.3,337.6 470.8,337.6 471.3,337.6 471.8,337.6 472.3,337.6 472.8,337.6 473.3,337.6 473.8,337.6 474.3,335.4 474.8,339.9 475.3,337.6 475.8,337.6 476.3,337.6 476.8,339.9 477.3,339.9 477.4,335.4 477.5,342.2 477.8,337.6 478.3,337.6 478.8,337.6 479.3,339.9 479.4,337.6 479.5,339.9 479.8,339.9 480.3,339.9 480.4,335.4 480.5,339.9 480.8,337.6 481.3,339.9 481.8,339.9 482.3,339.9 482.8,339.9 483.3,339.9 483.8,339.9 484.3,339.9 484.8,339.9 485.3,342.2 485.8,342.2 486.3,339.9 486.8,339.9 487.3,339.9 487.8,342.2 488.3,342.2 488.8,339.9 488.9,335.4 489.0,342.2 489.3,342.2 489.8,342.2 489.9,339.9 490.0,342.2 490.3,342.2 490.8,342.2 491.3,339.9 491.8,339.9 492.3,342.2 492.8,342.2 493.3,339.9 493.8,342.2 494.3,342.2 494.8,344.5 495.3,342.2 495.8,342.2 496.3,344.5 496.4,339.9 496.5,344.5 496.8,342.2 497.3,344.5 497.4,342.2 497.5,346.8 497.8,344.5 498.3,342.2 498.8,344.5 498.9,342.2 499.0,344.5 499.3,342.2 499.8,344.5 500.3,342.2 500.8,344.5 501.3,346.8 501.8,342.2" fill="none" stroke="#f40c0c" stroke-width="1.6" stroke-linejoin="round"/><polyline points="504.1,340.0 506.6,337.0 507.3,343.0 507.9,339.0 508.7,346.0 509.5,343.0 510.6,347.5 512.1,346.0 513.6,347.5 514.3,346.5 515.8,343.0 516.8,344.0 517.8,339.5 518.5,340.0 519.5,337.0" fill="none" stroke="#f40c0c" stroke-width="1.6" stroke-linejoin="round"/><polyline points="530.8,238.0 533.3,239.5 535.3,241.0 537.1,244.6 539.3,245.5 541.3,246.6 543.0,250.0" fill="none" stroke="#f40c0c" stroke-width="1.6" stroke-linejoin="round"/><polyline points="543.0,251.0 543.5,251.0 544.0,251.0 544.5,253.3 545.0,255.6 545.5,255.6 546.0,253.3 546.5,257.8 547.0,257.8 547.5,255.6 548.0,257.8 548.5,257.8 549.0,260.1 549.5,260.1 550.0,262.4 550.5,264.7 551.0,262.4 551.5,264.7 552.0,264.7 552.5,267.0 553.0,267.0 553.5,267.0 554.0,269.2 554.5,269.2 555.0,269.2 555.5,271.5 556.0,271.5 556.5,271.5 557.0,273.8 557.5,276.1 558.0,276.1 558.5,276.1 559.0,278.4 559.5,278.4 560.0,278.4 560.5,280.6 561.0,278.4 561.5,280.6 562.0,280.6 562.5,282.9 563.0,285.2 563.5,282.9 564.0,285.2 564.5,287.5 565.0,285.2 565.5,289.8 566.0,289.8 566.5,289.8 567.0,292.0 567.5,289.8 568.0,292.0 568.5,294.3 569.0,294.3 569.5,294.3 570.0,296.6 570.5,296.6 571.0,296.6 571.5,298.9 572.0,296.6 572.5,298.9 573.0,301.2 573.5,301.2 574.0,303.4 574.5,303.4 575.0,303.4 575.5,303.4 576.0,305.7 576.5,305.7 577.0,308.0" fill="none" stroke="#f40c0c" stroke-width="1.6" stroke-linejoin="round"/><polyline points="577.4,310.3 577.9,308.0 578.4,310.3 578.9,310.3 579.4,312.6 579.9,312.6 580.4,312.6 580.9,314.8 581.4,314.8 581.9,314.8 582.4,319.4 582.9,319.4 583.4,319.4 583.9,317.1 584.4,321.7 584.9,321.7 585.4,324.0 585.9,321.7 586.4,326.2 586.9,326.2 587.4,326.2 587.9,326.2 588.4,328.5 588.9,328.5 589.4,330.8 589.9,330.8" fill="none" stroke="#f40c0c" stroke-width="1.6" stroke-linejoin="round"/><polyline points="590.3,333.1 590.8,333.1 591.3,333.1 591.8,333.1 592.3,333.1 592.8,333.1 593.3,333.1 593.8,333.1 594.3,333.1 594.8,333.1 595.3,333.1 595.8,335.4 596.3,335.4 596.8,333.1 597.3,335.4 597.8,335.4 598.3,333.1 598.4,328.5 598.5,335.4 598.8,335.4 599.3,335.4 599.8,335.4 600.3,335.4 600.8,335.4 601.3,335.4 601.8,335.4 602.3,335.4 602.8,335.4 603.3,335.4 603.8,335.4 604.3,335.4 604.8,335.4 605.3,335.4 605.8,335.4 606.3,335.4 606.4,330.8 606.5,335.4 606.8,335.4 607.3,337.6 607.8,337.6 608.3,337.6 608.8,335.4 609.3,337.6 609.8,337.6 610.3,337.6 610.8,337.6 611.3,337.6 611.8,337.6 612.3,337.6 612.8,337.6 613.3,337.6 613.8,337.6 614.3,337.6 614.8,337.6 615.3,339.9 615.8,337.6 616.3,337.6 616.8,339.9 617.3,337.6 617.8,339.9 618.3,337.6 618.8,337.6 619.3,337.6 619.8,339.9 620.3,339.9 620.8,339.9 621.3,339.9 621.8,339.9 622.3,339.9 622.8,339.9 623.3,337.6 623.8,342.2 624.3,339.9 624.8,339.9 625.3,339.9 625.8,342.2 625.9,339.9 626.0,342.2 626.3,339.9 626.8,342.2 627.3,339.9 627.8,342.2 628.3,339.9 628.4,335.4 628.5,342.2 628.8,339.9 629.3,342.2 629.8,342.2 630.3,342.2 630.8,344.5 631.3,344.5 631.8,344.5 632.3,342.2 632.8,344.5 633.3,342.2 633.8,342.2 634.3,342.2 634.8,344.5 635.3,342.2 635.4,337.6 635.5,342.2 635.8,342.2 636.3,342.2 636.8,344.5 637.3,342.2 637.8,344.5 638.3,342.2 638.8,344.5 639.3,342.2 639.8,344.5" fill="none" stroke="#f40c0c" stroke-width="1.6" stroke-linejoin="round"/><polyline points="642.1,340.0 644.6,337.0 645.3,343.0 645.9,339.0 646.7,346.0 647.5,343.0 648.6,347.5 650.1,346.0 651.6,347.5 652.3,346.5 653.8,343.0 654.8,344.0 655.8,339.5 656.5,340.0 657.5,337.0" fill="none" stroke="#f40c0c" stroke-width="1.6" stroke-linejoin="round"/><polyline points="668.8,238.0 671.3,239.5 673.3,241.0 675.1,244.6 677.3,245.5 679.3,246.6 681.0,250.0" fill="none" stroke="#f40c0c" stroke-width="1.6" stroke-linejoin="round"/><polyline points="681.0,251.0 681.5,253.3 682.0,251.0 682.5,253.3 683.0,255.6 683.5,253.3 684.0,255.6 684.5,255.6 685.0,255.6 685.5,257.8 686.0,257.8 686.5,260.1 687.0,262.4 687.5,260.1 688.0,262.4 688.5,264.7 689.0,262.4 689.5,262.4 690.0,267.0 690.5,267.0 691.0,267.0 691.5,267.0 692.0,269.2 692.5,271.5 693.0,271.5 693.5,273.8 694.0,271.5 694.5,273.8 695.0,273.8 695.5,276.1 696.0,276.1 696.5,273.8 697.0,276.1 697.5,276.1 698.0,278.4 698.5,280.6 699.0,280.6 699.5,282.9 700.0,282.9 700.5,282.9 701.0,282.9 701.5,282.9 702.0,285.2 702.5,287.5 703.0,285.2 703.5,287.5 704.0,287.5 704.5,287.5 705.0,289.8 705.5,289.8 706.0,292.0 706.5,292.0 707.0,292.0 707.5,294.3 708.0,294.3 708.5,294.3 709.0,296.6 709.5,296.6 710.0,296.6 710.5,301.2 711.0,301.2 711.5,303.4 712.0,301.2 712.5,301.2 713.0,303.4 713.5,305.7 714.0,305.7 714.5,305.7 715.0,308.0" fill="none" stroke="#f40c0c" stroke-width="1.6" stroke-linejoin="round"/><polyline points="715.4,310.3 715.9,308.0 716.4,310.3 716.9,312.6 717.4,312.6 717.9,310.3 718.4,312.6 718.9,314.8 719.4,317.1 719.9,317.1 720.4,317.1 720.9,317.1 721.4,319.4 721.9,319.4 722.4,321.7 722.9,319.4 723.4,324.0 723.9,324.0" fill="none" stroke="#f40c0c" stroke-width="1.6" stroke-linejoin="round"/></g>
<polygon points="14,298.6 31,298.6 38.8,307 31,315.3 14,315.3" fill="#ff0000" shape-rendering="auto"/>
</svg>
<div class="a" style="left:744px;top:88px;width:4px;height:440px;background:#e7eaea;border-left:1px solid #b0b0b0;border-top:1px solid #b0b0b0;border-right:1px solid #fff;border-bottom:1px solid #fff"></div>
<div class="a" style="left:730px;top:93px;width:4px;height:1px;background:#c4c4c4"></div><div class="a" style="left:758px;top:93px;width:4px;height:1px;background:#c4c4c4"></div>
<div class="a" style="left:730px;top:179px;width:4px;height:1px;background:#c4c4c4"></div><div class="a" style="left:758px;top:179px;width:4px;height:1px;background:#c4c4c4"></div>
<div class="a" style="left:730px;top:265px;width:4px;height:1px;background:#c4c4c4"></div><div class="a" style="left:758px;top:265px;width:4px;height:1px;background:#c4c4c4"></div>
<div class="a" style="left:730px;top:350px;width:4px;height:1px;background:#c4c4c4"></div><div class="a" style="left:758px;top:350px;width:4px;height:1px;background:#c4c4c4"></div>
<div class="a" style="left:730px;top:436px;width:4px;height:1px;background:#c4c4c4"></div><div class="a" style="left:758px;top:436px;width:4px;height:1px;background:#c4c4c4"></div>
<div class="a" style="left:730px;top:522px;width:4px;height:1px;background:#c4c4c4"></div><div class="a" style="left:758px;top:522px;width:4px;height:1px;background:#c4c4c4"></div>
<div class="a" style="left:735px;top:302px;width:21px;height:10px;border:1px solid #8a8a8a;border-radius:2.500px;background:linear-gradient(180deg,#fff 0,#f4f4f4 3px,#d8d8d8 4px,#d0d0d0 8px);box-shadow:inset 0 0 0 1px #fff"></div>
<div class="a" style="left:767px;top:80px;width:2px;height:456px;border-left:1px solid #a0a0a0;border-right:1px solid #fff"></div>
<div class="gb" style="left:772px;top:87px;width:226px;height:326px"></div><div class="gl" style="left:779px;top:86px;width:65px"></div>
<div class="gb" style="left:772px;top:421px;width:226px;height:53px"></div><div class="gl" style="left:779px;top:420px;width:85px"></div>
<div class="gb" style="left:772px;top:482px;width:226px;height:53px"></div><div class="gl" style="left:779px;top:481px;width:79px"></div>
<div class="gb" style="left:670px;top:546px;width:328px;height:129px"></div><div class="gl" style="left:677px;top:545px;width:110px"></div>
<div class="combo" style="left:850px;top:310px"><i></i></div>
<div class="combo" style="left:850px;top:439px"><i></i></div>
<div class="combo" style="left:850px;top:500px"><i></i></div>
<div class="lv" style="left:683px;top:559px;width:302px;height:109px"><div class="a" style="left:0;top:0;width:300px;height:24px;background:linear-gradient(180deg,#fff 0,#fff 9px,#f7f8fa 10px,#f1f2f4 23px);border-bottom:1px solid #d5d5d5"></div><div class="a" style="left:80px;top:0;width:1px;height:24px;background:linear-gradient(180deg,#fff,#dfe2e6 50%,#e3e6ea)"></div><div class="a" style="left:80px;top:24px;width:1px;height:83px;background:#ededed"></div><div class="a" style="left:240px;top:0;width:1px;height:24px;background:linear-gradient(180deg,#fff,#dfe2e6 50%,#e3e6ea)"></div><div class="a" style="left:240px;top:24px;width:1px;height:83px;background:#ededed"></div><div class="a" style="left:299px;top:0;width:1px;height:24px;background:#e3e6ea"></div><div class="a" style="left:0;top:43px;width:300px;height:1px;background:#ededed"></div><div class="a" style="left:0;top:62px;width:300px;height:1px;background:#ededed"></div><div class="a" style="left:0;top:81px;width:300px;height:1px;background:#ededed"></div><div class="a" style="left:0;top:100px;width:300px;height:1px;background:#ededed"></div></div>
<div class="lv" style="left:14px;top:539px;width:653px;height:110px"><div class="a" style="left:1px;top:1px;width:649px;height:20px;border:1px solid #dadada;border-radius:2px;background:linear-gradient(180deg,#f8f8f8 0,#efefef 9px,#e5e5e5 17px)"></div><div class="a" style="left:164px;top:2px;width:1px;height:105px;background:#e8eaf2"></div><div class="a" style="left:326px;top:2px;width:1px;height:105px;background:#e8eaf2"></div><div class="a" style="left:488px;top:2px;width:1px;height:105px;background:#e8eaf2"></div><div class="a" style="left:1px;top:40px;width:649px;height:1px;background:#ededed"></div><div class="a" style="left:1px;top:60px;width:649px;height:1px;background:#ededed"></div><div class="a" style="left:1px;top:80px;width:649px;height:1px;background:#ededed"></div><div class="a" style="left:1px;top:100px;width:649px;height:1px;background:#ededed"></div><div class="a" style="left:8px;top:5px;width:13px;height:13px;border:1px solid #8e8f8f;background:linear-gradient(135deg,#d8d8d8,#fafafa);box-shadow:inset 0 0 0 1px #f4f4f4"></div><svg class="a" style="left:8px;top:5px" width="13" height="13" viewBox="0 0 13 13"><path d="M3 6.500l2.400 3.200L10 2.800" fill="none" stroke="#3b4f93" stroke-width="1.900"/></svg></div>
<div class="btn" style="left:15px;top:650px;width:46px"></div>
<div class="btn dis" style="left:66px;top:650px;width:96px"></div>
<div class="btn" style="left:167px;top:650px;width:53px"></div>
<div class="btn dis" style="left:225px;top:650px;width:53px"></div>
<div class="a" style="left:14px;top:673px;width:653px;height:2px;border-top:1px solid #a0a0a0;border-bottom:1px solid #fff"></div>
<svg class="a" style="left:954px;top:682px" width="40" height="18" viewBox="954 682 40 18">
<path d="M956 690.500h14" stroke="#4a4a4a" stroke-width="1.300" fill="none"/>
<path d="M959 690.500l3-3.500h4M961 690.500l3 3.500h3.500" stroke="#4a4a4a" stroke-width="1.200" fill="none"/>
<circle cx="956.500" cy="690.500" r="1.600" fill="#4a4a4a"/><circle cx="966.500" cy="687" r="1.300" fill="#4a4a4a"/><rect x="966.500" y="692.800" width="2.600" height="2.600" fill="#4a4a4a"/>
<path d="M968.500 688.500l3 2-3 2z" fill="#4a4a4a"/>
<rect x="977.500" y="682.500" width="14" height="16" fill="#f3f3f3" stroke="#e4e4e4" stroke-width="1"/>
<path d="M981.500 690h7l-3.500 4z" fill="#404040"/></svg>
<span class="t" style="left:33.50px;top:11.84px;font-size:12px;line-height:14px;letter-spacing:-0.194px;word-spacing:0.194px;color:#000;text-shadow:0 0 5px #fff,0 0 8px #fff,0 0 12px #fff,0 0 16px rgba(255,255,255,.9);">Oscilloscope Software 2.0.8.7</span>
<span class="t" style="left:20.00px;top:36.84px;font-size:12px;line-height:14px;letter-spacing:-0.511px;word-spacing:0.511px;">File</span>
<span class="t" style="left:51.00px;top:36.84px;font-size:12px;line-height:14px;letter-spacing:-0.199px;word-spacing:0.199px;">View</span>
<span class="t" style="left:90.50px;top:36.84px;font-size:12px;line-height:14px;letter-spacing:-0.086px;word-spacing:0.086px;">Format</span>
<span class="t" style="left:142.40px;top:36.84px;font-size:12px;line-height:14px;letter-spacing:0.159px;word-spacing:-0.159px;">Communications</span>
<span class="t" style="left:248.30px;top:36.84px;font-size:12px;line-height:14px;letter-spacing:-0.211px;word-spacing:0.211px;">Language</span>
<span class="t" style="left:314.40px;top:36.84px;font-size:12px;line-height:14px;letter-spacing:-0.097px;word-spacing:0.097px;">Help</span>
<span class="t" style="left:781.50px;top:80.84px;font-size:12px;line-height:14px;letter-spacing:-0.318px;word-spacing:0.318px;">CH1 Cursor</span>
<span class="t" style="left:785.50px;top:110.84px;font-size:12px;line-height:14px;letter-spacing:0.000px;word-spacing:0.000px;">dy:</span>
<span class="t" style="left:785.50px;top:135.84px;font-size:12px;line-height:14px;letter-spacing:0.000px;word-spacing:0.000px;">y1:</span>
<span class="t" style="left:785.50px;top:160.84px;font-size:12px;line-height:14px;letter-spacing:0.000px;word-spacing:0.000px;">y2:</span>
<span class="t" style="left:785.50px;top:185.84px;font-size:12px;line-height:14px;letter-spacing:0.000px;word-spacing:0.000px;">dx:</span>
<span class="t" style="left:785.50px;top:210.84px;font-size:12px;line-height:14px;letter-spacing:0.000px;word-spacing:0.000px;">x1:</span>
<span class="t" style="left:785.50px;top:235.84px;font-size:12px;line-height:14px;letter-spacing:0.000px;word-spacing:0.000px;">x2:</span>
<span class="t" style="left:785.50px;top:260.84px;font-size:12px;line-height:14px;letter-spacing:-0.216px;word-spacing:0.216px;">Divisions:</span>
<span class="t" style="left:850.70px;top:260.84px;font-size:12px;line-height:14px;letter-spacing:-0.072px;word-spacing:0.072px;">[-20~20]</span>
<span class="t" style="left:849.70px;top:285.84px;font-size:12px;line-height:14px;letter-spacing:-0.590px;word-spacing:0.590px;">0.02</span>
<span class="t" style="left:785.50px;top:314.84px;font-size:12px;line-height:14px;letter-spacing:-0.272px;word-spacing:0.272px;">Type:</span>
<span class="t" style="left:854.50px;top:314.84px;font-size:12px;line-height:14px;letter-spacing:-0.047px;word-spacing:0.047px;">None</span>
<span class="t" style="left:781.50px;top:414.84px;font-size:12px;line-height:14px;letter-spacing:-0.062px;word-spacing:0.062px;">CH1 Time / Div</span>
<span class="t" style="left:785.50px;top:443.84px;font-size:12px;line-height:14px;letter-spacing:-0.560px;word-spacing:0.560px;">scale:</span>
<span class="t" style="left:854.00px;top:443.84px;font-size:12px;line-height:14px;letter-spacing:-0.840px;word-spacing:0.840px;">10 uS</span>
<span class="t" style="left:781.50px;top:475.84px;font-size:12px;line-height:14px;letter-spacing:-0.041px;word-spacing:0.041px;">CH1 Volt / Div</span>
<span class="t" style="left:785.50px;top:504.84px;font-size:12px;line-height:14px;letter-spacing:-0.560px;word-spacing:0.560px;">scale:</span>
<span class="t" style="left:854.00px;top:504.84px;font-size:12px;line-height:14px;letter-spacing:-0.522px;word-spacing:0.522px;">100 mV</span>
<span class="t" style="left:680.00px;top:539.84px;font-size:12px;line-height:14px;letter-spacing:-0.261px;word-spacing:0.261px;">CH1 WaveForm Info</span>
<span class="t" style="left:691.00px;top:565.84px;font-size:12px;line-height:14px;letter-spacing:-0.004px;word-spacing:0.004px;">Type</span>
<span class="t" style="left:771.00px;top:565.84px;font-size:12px;line-height:14px;letter-spacing:-0.163px;word-spacing:0.163px;">Value</span>
<span class="t" style="left:691.00px;top:587.84px;font-size:12px;line-height:14px;letter-spacing:-0.303px;word-spacing:0.303px;">Frequency:</span>
<span class="t" style="left:691.00px;top:606.84px;font-size:12px;line-height:14px;letter-spacing:-0.290px;word-spacing:0.290px;">Period:</span>
<span class="t" style="left:691.00px;top:625.84px;font-size:12px;line-height:14px;letter-spacing:-0.727px;word-spacing:0.727px;">PK-PK:</span>
<span class="t" style="left:770.75px;top:587.84px;font-size:12px;line-height:14px;letter-spacing:-0.495px;word-spacing:0.495px;">62.189 kHz</span>
<span class="t" style="left:770.75px;top:606.84px;font-size:12px;line-height:14px;letter-spacing:-0.684px;word-spacing:0.684px;">16.080 uS</span>
<span class="t" style="left:770.75px;top:625.84px;font-size:12px;line-height:14px;letter-spacing:-0.524px;word-spacing:0.524px;">404.000 mV</span>
<span class="t" style="left:817.25px;top:684.84px;font-size:12px;line-height:14px;letter-spacing:-0.173px;word-spacing:0.173px;color:#1e8a1e;">automatically check USB:</span>
<span class="t" style="left:22.50px;top:684.84px;font-size:12px;line-height:14px;letter-spacing:-0.051px;word-spacing:0.051px;">D:\Осцилограммы\2036117782.bin</span>
<span class="t" style="left:44.50px;top:543.84px;font-size:12px;line-height:14px;letter-spacing:-0.839px;word-spacing:0.839px;">CH1</span>
<span class="t" style="left:304.25px;top:543.84px;font-size:12px;line-height:14px;letter-spacing:-0.652px;word-spacing:0.652px;">10 uS</span>
<span class="t" style="left:455.50px;top:543.84px;font-size:12px;line-height:14px;letter-spacing:-0.472px;word-spacing:0.472px;">100 mV</span>
<span class="t" style="left:509.00px;top:543.84px;font-size:12px;line-height:14px;letter-spacing:-0.133px;word-spacing:0.133px;">/1</span>
<span class="t" style="left:21.00px;top:654.84px;font-size:12px;line-height:14px;letter-spacing:-0.700px;word-spacing:0.700px;">To FFT</span>
<span class="t" style="left:72.00px;top:654.84px;font-size:12px;line-height:14px;letter-spacing:0.059px;word-spacing:-0.059px;color:#838383;">To Mathematics</span>
<span class="t" style="left:171.80px;top:654.84px;font-size:12px;line-height:14px;letter-spacing:-0.020px;word-spacing:0.020px;">Inverted</span>
<span class="t" style="left:230.60px;top:654.84px;font-size:12px;line-height:14px;letter-spacing:-0.381px;word-spacing:0.381px;color:#838383;">Remove</span>
<span class="t" style="left:14.70px;top:299.84px;font-size:12px;line-height:14px;letter-spacing:-0.839px;word-spacing:0.839px;font-style:italic;color:#200000;">CH1</span>
</body></html>
